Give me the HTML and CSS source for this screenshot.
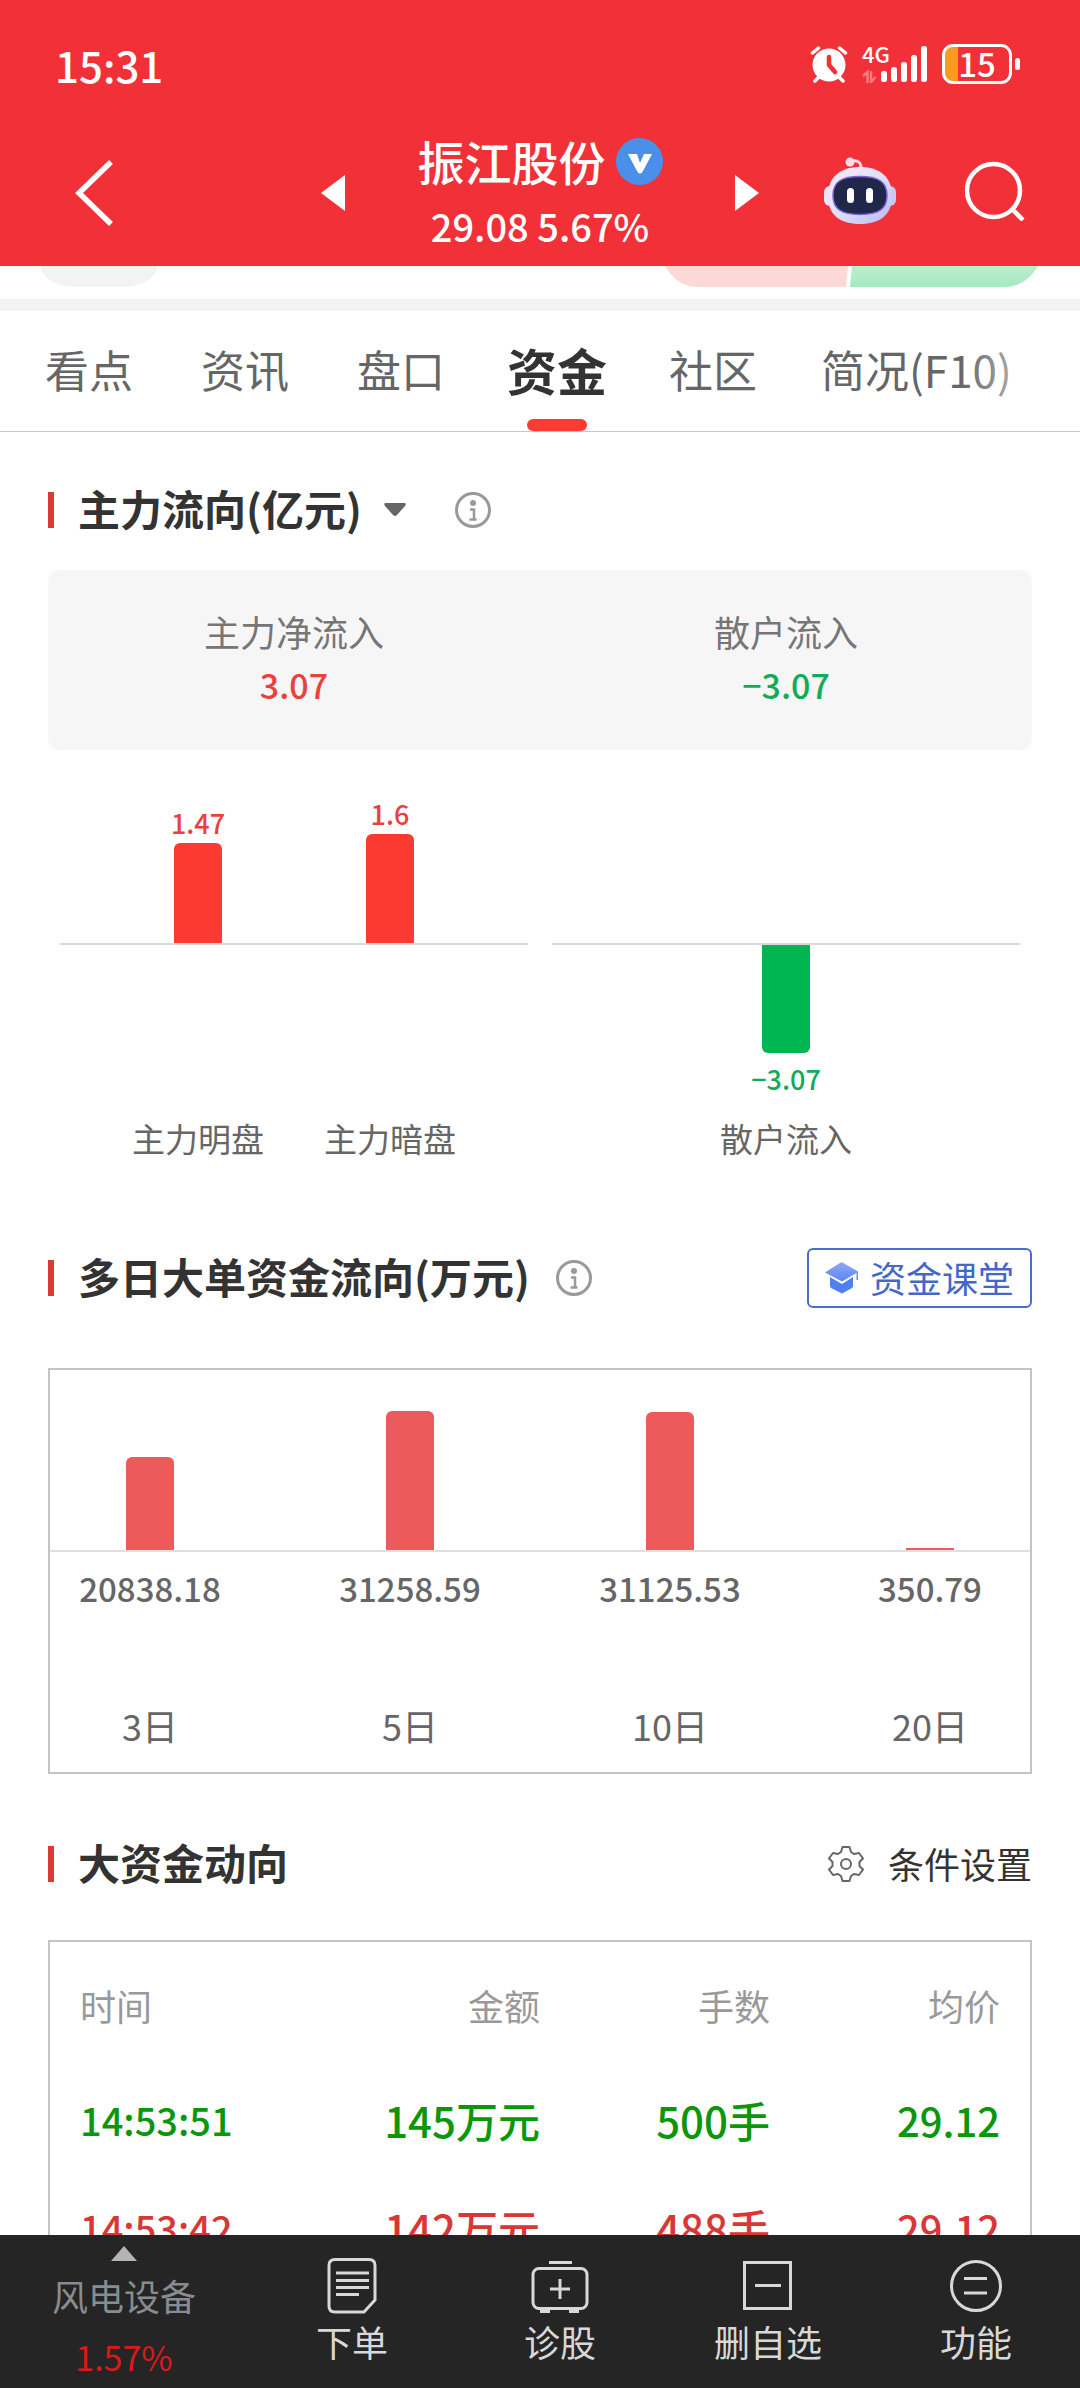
FILE: index.html
```html
<!DOCTYPE html>
<html lang="zh-CN">
<head>
<meta charset="utf-8">
<meta name="viewport" content="width=device-width, initial-scale=1">
<title>振江股份 资金</title>
<link rel="stylesheet" href="styles.css">
</head>
<body>
<header class="top">
  <div class="status">
    <span class="clock">15:31</span>
    <div class="status-icons">
      <svg class="alarm" width="38" height="38" viewBox="0 0 38 38" aria-hidden="true">
        <g stroke="#fff" stroke-width="3.500" stroke-linecap="round"><path d="M2.500 8l6-5M35.500 8l-6-5M10 31l-5 5M28 31l5 5"/></g>
        <circle cx="19" cy="20" r="16.500" fill="#fff"/>
        <path d="M19 12v8l6 7" fill="none" stroke="#f13037" stroke-width="4.500" stroke-linecap="round" stroke-linejoin="round"/>
      </svg>
      <div class="network">
        <span class="net-label">4G</span>
        <svg width="66" height="38" viewBox="0 0 66 38" aria-hidden="true">
          <g stroke="#ff7a80" stroke-width="2.500" fill="none"><path d="M1 31l4.500-4v11M9 26v11l4.500-5"/></g>
          <g fill="#fff"><rect x="19" y="26" width="6" height="11" rx="2.500"/><rect x="29" y="22" width="6" height="15" rx="2.500"/><rect x="39" y="17" width="6" height="20" rx="2.500"/><rect x="49" y="10" width="6" height="27" rx="2.500"/><rect x="59" y="1" width="6" height="36" rx="2.500"/></g>
        </svg>
      </div>
      <div class="battery"><span class="battery-body">15</span><span class="battery-tip"></span></div>
    </div>
  </div>
  <div class="nav">
    <button class="icon-btn back" aria-label="返回"><svg width="40" height="66" viewBox="0 0 40 66"><path d="M37 2L5 33l32 31" fill="none" stroke="#fff" stroke-width="5.500"/></svg></button>
    <button class="icon-btn" aria-label="上一只"><svg width="24" height="36" viewBox="0 0 24 36"><path d="M24 0v36L0 18z" fill="#fff"/></svg></button>
    <div class="stock">
      <h1 class="stock-name">振江股份
        <svg width="47" height="47" viewBox="0 0 47 47" aria-hidden="true"><circle cx="23.500" cy="23.500" r="23.500" fill="#4a90ea"/><path d="M12 16h9l3 9 4-9h8l-9 17q-3 5-6 0z" fill="#fff"/></svg>
      </h1>
      <p class="quote">29.08 5.67%</p>
    </div>
    <button class="icon-btn" aria-label="下一只"><svg width="24" height="36" viewBox="0 0 24 36"><path d="M0 0v36l24-18z" fill="#fff"/></svg></button>
    <div class="nav-tools">
      <button class="icon-btn" aria-label="智能助手">
        <svg width="72" height="68" viewBox="0 0 72 68">
          <defs><linearGradient id="shell" x1="0" y1="0" x2="1" y2="1"><stop offset="0" stop-color="#fbe9f5"/><stop offset=".5" stop-color="#dfe0fa"/><stop offset="1" stop-color="#b9b8f0"/></linearGradient></defs>
          <path d="M27 4q11-2 10 9" fill="none" stroke="#fbdcea" stroke-width="3"/><circle cx="26" cy="5" r="4.500" fill="#f8dce8"/>
          <rect x="0" y="29" width="14" height="20" rx="6" fill="#eee3f8"/><rect x="58" y="29" width="14" height="20" rx="6" fill="#c9c8f4"/>
          <path d="M36 10c20 0 32 10 32 29S56 67 36 67 4 58 4 39s12-29 32-29z" fill="url(#shell)"/>
          <path d="M36 19.500c18 0 27 5 27 19s-9 19-27 19-27-5-27-19 9-19 27-19z" fill="#1f2848" stroke="#7d62dd" stroke-width="1.500"/>
          <rect x="23" y="31" width="7" height="15" rx="3.500" fill="#fff"/><rect x="42" y="31" width="7" height="15" rx="3.500" fill="#fff"/>
        </svg>
      </button>
      <button class="icon-btn" aria-label="搜索"><svg width="60" height="60" viewBox="0 0 60 60"><circle cx="28.500" cy="29.500" r="26.500" fill="none" stroke="#fff" stroke-width="4.500"/><path d="M47 48l11 11" stroke="#fff" stroke-width="4.500"/></svg></button>
    </div>
  </div>
</header>

<main class="content">
  <div class="peek">
    <span class="peek-pill"></span>
    <svg width="379" height="21" viewBox="0 0 379 21" aria-hidden="true">
      <defs>
        <linearGradient id="bear" x1="0" y1="0" x2="0" y2="1"><stop offset="0" stop-color="#bceecf"/><stop offset="1" stop-color="#a4eac0"/></linearGradient>
      </defs>
      <path d="M3 0q12 21 34 21h147l2-21z" fill="#fcd9d7"/><path d="M190 0l-2 21h154q22 0 34-21z" fill="url(#bear)"/>
    </svg>
  </div>
  <nav class="tabs">
    <a class="tab" href="#">看点</a>
    <a class="tab" href="#">资讯</a>
    <a class="tab" href="#">盘口</a>
    <a class="tab active" href="#">资金</a>
    <a class="tab" href="#">社区</a>
    <a class="tab" href="#">简况(F10)</a>
  </nav>

  <section class="section">
    <div class="heading first">
      <h2 class="title">主力流向(亿元)</h2>
      <button class="icon-btn caret" aria-label="切换"><svg width="22" height="14" viewBox="0 0 22 14"><path d="M2 0h18q3 0 1 3l-8 9q-2 2-4 0L1 3q-2-3 1-3z" fill="#666"/></svg></button>
      <button class="icon-btn info" aria-label="说明"><svg width="36" height="36" viewBox="0 0 36 36"><circle cx="18" cy="18" r="16.500" fill="none" stroke="#999" stroke-width="3"/><circle cx="18" cy="11" r="3" fill="#999"/><path d="M15 17.500h4V27M14.500 27.500h7" fill="none" stroke="#999" stroke-width="2.500"/></svg></button>
    </div>
    <div class="summary">
      <div class="summary-item"><span>主力净流入</span><strong class="up">3.07</strong></div>
      <div class="summary-item"><span>散户流入</span><strong class="down">−3.07</strong></div>
    </div>
    <div class="flow">
      <div class="panel">
        <div class="above">
          <div class="col"><span class="bar-value up">1.47</span><span class="bar red" style="height:100px"></span></div>
          <div class="col"><span class="bar-value up">1.6</span><span class="bar red" style="height:109px"></span></div>
        </div>
        <div class="below"></div>
        <div class="names"><span class="col">主力明盘</span><span class="col">主力暗盘</span></div>
      </div>
      <div class="panel">
        <div class="above"></div>
        <div class="below"><div class="col"><span class="bar green" style="height:108px"></span><span class="bar-value low down">−3.07</span></div></div>
        <div class="names"><span class="col">散户流入</span></div>
      </div>
    </div>
  </section>

  <section class="section">
    <div class="heading">
      <h2 class="title">多日大单资金流向(万元)</h2>
      <button class="icon-btn info-near" aria-label="说明"><svg width="36" height="36" viewBox="0 0 36 36"><circle cx="18" cy="18" r="16.500" fill="none" stroke="#999" stroke-width="3"/><circle cx="18" cy="11" r="3" fill="#999"/><path d="M15 17.500h4V27M14.500 27.500h7" fill="none" stroke="#999" stroke-width="2.500"/></svg></button>
      <button class="class-btn">
        <svg width="36" height="32" viewBox="0 0 36 32" aria-hidden="true"><defs><linearGradient id="cap" x1="0" y1="0" x2="0" y2="1"><stop offset="0" stop-color="#8fa8f6"/><stop offset="1" stop-color="#5b86f2"/></linearGradient></defs><path d="M17.500 0L34 9.500V18h-1.500v-7L18 19.500 1 10.500z" fill="url(#cap)"/><path d="M6 15l12 7 11-7v9q0 1-1 2l-9 5q-1 1-2 0l-10-5q-1-1-1-2z" fill="#4f80f1"/></svg>
        <span class="btn-text">资金课堂</span>
      </button>
    </div>
    <div class="days">
      <div class="day-bars">
        <span class="day-cell"><span class="bar rose" style="height:93px"></span></span>
        <span class="day-cell"><span class="bar rose" style="height:139px"></span></span>
        <span class="day-cell"><span class="bar rose" style="height:138px"></span></span>
        <span class="day-cell"><span class="bar rose thin" style="height:2px"></span></span>
      </div>
      <div class="day-values"><span>20838.18</span><span>31258.59</span><span>31125.53</span><span>350.79</span></div>
      <div class="day-names"><span>3日</span><span>5日</span><span>10日</span><span>20日</span></div>
    </div>
  </section>

  <section class="section">
    <div class="heading">
      <h2 class="title">大资金动向</h2>
      <button class="settings-btn">
        <svg width="36" height="36" viewBox="0 0 36 36" aria-hidden="true"><path d="M14.500 1h7l1.500 5 3 2 5-1 4 5.500-3.500 3.500v4l3.500 3.500-4 5.500-5-1-3 2-1.500 5h-7l-1.500-5-3-2-5 1-4-5.500L4.500 20v-4L1 12.500 5 7l5 1 3-2z" fill="none" stroke="#666" stroke-width="2" stroke-linejoin="round"/><circle cx="18" cy="18" r="5" fill="none" stroke="#666" stroke-width="2"/></svg>
        <span class="btn-text">条件设置</span>
      </button>
    </div>
    <div class="trades">
      <table>
        <thead><tr><th>时间</th><th>金额</th><th>手数</th><th>均价</th></tr></thead>
        <tbody>
          <tr class="sell"><td class="time">14:53:51</td><td class="amount">145万元</td><td class="amount">500手</td><td>29.12</td></tr>
          <tr class="buy"><td class="time">14:53:42</td><td class="amount">142万元</td><td class="amount">488手</td><td>29.12</td></tr>
        </tbody>
      </table>
    </div>
  </section>
</main>

<footer class="bottom">
  <a class="industry" href="#">
    <svg width="26" height="15" viewBox="0 0 26 15" aria-hidden="true"><path d="M13 0l13 15H0z" fill="#b4b4b4"/></svg>
    <span class="industry-name">风电设备</span>
    <span class="industry-rate">1.57%</span>
  </a>
  <button class="action"><svg width="60" height="60" viewBox="0 0 60 60" fill="none" stroke="#d8d8d8" stroke-width="3"><path d="M13 3.500h34q6 0 6 6V44L42 56H13q-6 0-6-6V9.500q0-6 6-6z"/><path d="M14 17h33M14 24.500h33M14 31.500h33M14 38.500h23"/></svg>下单</button>
  <button class="action"><svg width="60" height="60" viewBox="0 0 60 60" fill="none" stroke="#d8d8d8" stroke-width="3"><path d="M19 6.500h23"/><rect x="3" y="12.500" width="54" height="40" rx="6"/><path d="M30 23v20M20 33h20M10 55.500h10M39 55.500h10"/></svg>诊股</button>
  <button class="action"><svg width="60" height="60" viewBox="0 0 60 60" fill="none" stroke="#d8d8d8" stroke-width="3"><path d="M6.500 6.500h46v46h-46zM17 29.500h26"/></svg>删自选</button>
  <button class="action"><svg width="60" height="60" viewBox="0 0 60 60" fill="none" stroke="#d8d8d8" stroke-width="3"><circle cx="30" cy="30" r="24.500"/><path d="M18 22.500h23M18 37h23"/></svg>功能</button>
</footer>
</body>
</html>
```
FILE: styles.css
```css
* { box-sizing: border-box; }

body {
  margin: 0;
  height: 100vh;
  display: flex;
  flex-direction: column;
  background: #fff;
  color: #333;
  font-family: "Noto Sans CJK SC", "Noto Sans", sans-serif;
  font-size: 36px;
}

svg { display: block; flex: none; }
h1, h2, p { margin: 0; }
a { color: inherit; text-decoration: none; }

button {
  margin: 0;
  padding: 0;
  border: 0;
  background: none;
  color: inherit;
  font: inherit;
  cursor: pointer;
}

/* Header */
.top {
  flex: none;
  background: #f13037;
  color: #fff;
}

.status {
  display: flex;
  align-items: center;
  justify-content: space-between;
  height: 128px;
  padding: 0 60px 0 55px;
}

.clock { font-size: 42px; font-weight: 500; }
.status-icons { display: flex; align-items: center; gap: 14px; }
.network { position: relative; }

.net-label {
  position: absolute;
  top: -4px;
  left: 0;
  font-size: 22px;
  line-height: 24px;
  font-weight: 500;
}

.battery { display: flex; align-items: center; gap: 3px; }

.battery-body {
  width: 70px;
  height: 40px;
  border: 3px solid #fff;
  border-radius: 11px;
  background: linear-gradient(to right, #f99a1c 13px, transparent 13px);
  font-size: 33px;
  line-height: 32px;
  font-weight: 500;
  text-align: center;
}

.battery-tip { width: 5px; height: 12px; border-radius: 3px; background: #fff; }

.nav {
  display: grid;
  grid-template-columns: 1fr 24px 390px 24px 1fr;
  align-items: center;
  height: 138px;
  padding-bottom: 10px;
}

.icon-btn { display: flex; }
.back { margin-left: 74px; }
.stock { text-align: center; }

.stock-name {
  display: flex;
  align-items: center;
  justify-content: center;
  gap: 10px;
  font-size: 47px;
  line-height: 66px;
  font-weight: 500;
}

.quote { font-size: 38px; line-height: 64px; font-weight: 500; }

.nav-tools {
  display: flex;
  align-items: center;
  justify-content: space-between;
  padding: 0 55px 4px 65px;
}

/* Scrolling content */
.content {
  flex: 1;
  min-height: 0;
  overflow-y: auto;
  scrollbar-width: none;
}

.peek {
  display: flex;
  align-items: flex-start;
  justify-content: space-between;
  height: 45px;
  padding: 0 39px 0 41px;
  border-bottom: 12px solid #f3f3f3;
}

.peek-pill {
  width: 116px;
  height: 21px;
  border-radius: 0 0 34px 34px / 0 0 21px 21px;
  background: #f3f3f3;
}

.tabs {
  position: relative;
  display: flex;
  height: 121px;
  padding-left: 11px;
  border-bottom: 1px solid #c4c8c4;
  color: #666;
  font-size: 44px;
  line-height: 116px;
  white-space: nowrap;
  overflow: hidden;
}

.tabs::after {
  content: "";
  position: absolute;
  top: 0;
  right: 0;
  width: 120px;
  height: 100%;
  background: linear-gradient(to right, rgba(255, 255, 255, 0), #fff);
}

.tab { position: relative; flex: none; min-width: 156px; text-align: center; }
.tab:last-child { padding: 0 30px; }
.tab.active { color: #333; font-size: 50px; font-weight: 700; }

.tab.active::after {
  content: "";
  position: absolute;
  bottom: 0;
  left: 50%;
  width: 60px;
  height: 12px;
  margin-left: -30px;
  border-radius: 6px;
  background: #fc3b32;
}

.section { padding: 0 48px; }

.heading {
  display: flex;
  align-items: center;
  height: 60px;
}

.heading.first { margin-top: 48px; margin-bottom: 30px; }

.heading::before {
  content: "";
  width: 6px;
  height: 36px;
  margin-right: 24px;
  background: #dd3838;
}

.title {
  padding-bottom: 4px;
  font-size: 42px;
  line-height: 56px;
  font-weight: 700;
}

.btn-text { padding-bottom: 3px; }
.caret { margin-left: 22px; }
.info { margin-left: 49px; }
.info-near { margin-left: 26px; }

.up { color: #e8423e; }
.down { color: #14aa56; }

.summary {
  display: grid;
  grid-template-columns: 1fr 1fr;
  padding: 35px 0 39px;
  border-radius: 12px;
  background: #f6f6f6;
  color: #767676;
  text-align: center;
}

.summary-item { display: flex; flex-direction: column; line-height: 53px; }
.summary-item strong { font-size: 34px; font-weight: 500; }

/* Today's inflow chart */
.flow {
  display: grid;
  grid-template-columns: 1fr 1fr;
  gap: 24px;
  margin-bottom: 86px;
  padding: 0 12px;
}

.above, .below, .names { display: flex; justify-content: center; }
.above { height: 195px; align-items: flex-end; border-bottom: 2px solid #d8d8d8; }
.below { height: 169px; align-items: flex-start; }
.names { color: #666; font-size: 33px; line-height: 48px; }

.col {
  display: flex;
  flex-direction: column;
  align-items: center;
  width: 192px;
}

.bar { width: 48px; }
.red { background: #fb3b32; border-radius: 6px 6px 0 0; }
.green { background: #00b650; border-radius: 0 0 6px 6px; }
.rose { background: #ed5a5c; border-radius: 6px 6px 0 0; }
.thin { border-radius: 0; }
.bar-value { font-size: 27px; line-height: 40px; font-weight: 500; }
.low { margin-top: 6px; }

/* Multi-day chart */
.class-btn {
  display: flex;
  align-items: center;
  gap: 10px;
  height: 60px;
  margin-left: auto;
  padding: 0 16px 0 15px;
  border: 2px solid #4a6cd0;
  border-radius: 6px;
  color: #4468c8;
}

.days {
  margin: 60px 0;
  padding-bottom: 22px;
  border: 2px solid #c4c4c4;
  color: #666;
}

.day-bars, .day-values, .day-names {
  display: grid;
  grid-template-columns: repeat(4, 200px);
  justify-content: space-between;
  text-align: center;
}

.day-bars { height: 182px; border-bottom: 2px solid #e0e0e0; }
.day-cell { display: flex; align-items: flex-end; justify-content: center; }
.day-values { font-size: 33px; line-height: 72px; font-weight: 500; }
.day-names { padding-top: 76px; line-height: 50px; }

/* Large orders */
.settings-btn {
  display: flex;
  align-items: center;
  gap: 24px;
  margin-left: auto;
}

.trades {
  margin-top: 46px;
  padding: 0 30px 30px;
  border: 2px solid #c4c4c4;
}

table { width: 100%; border-collapse: collapse; table-layout: fixed; }
th, td { padding: 0; text-align: right; white-space: nowrap; }
th:first-child, td:first-child { text-align: left; }
th { height: 126px; color: #999; font-weight: 400; }
td { height: 108px; padding-bottom: 5px; font-size: 40px; font-weight: 500; }
.time { font-size: 38px; }
.amount { font-size: 42px; }
.sell { color: #0c960c; }
.buy { color: #d93636; }

/* Bottom bar */
.bottom {
  flex: none;
  display: flex;
  height: 153px;
  background: #252525;
  color: #d8d8d8;
}

.industry {
  display: flex;
  flex-direction: column;
  align-items: center;
  width: 248px;
  padding-top: 11px;
  line-height: 62px;
}

.industry-name { margin-top: 3px; color: #888c90; }
.industry-rate { color: #d81a1a; font-size: 34px; }

.action {
  flex: 1;
  display: flex;
  flex-direction: column;
  align-items: center;
  padding-top: 21px;
  line-height: 50px;
}
```
